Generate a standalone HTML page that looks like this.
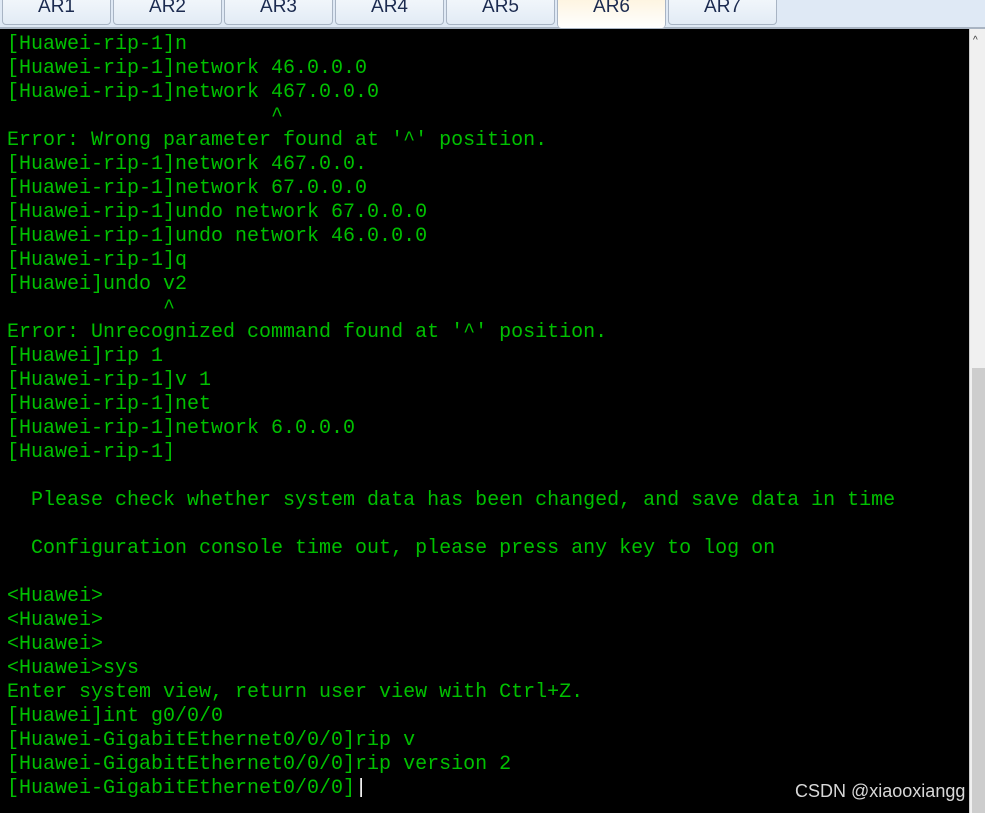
<!DOCTYPE html>
<html><head><meta charset="utf-8"><style>
*{margin:0;padding:0;box-sizing:border-box}
body{width:985px;height:813px;overflow:hidden;background:#000;position:relative;font-family:"Liberation Sans",sans-serif}
.tabs{position:absolute;left:0;top:0;width:985px;height:29px;background:#dfe9f5;border-bottom:2px solid #a9b4c2}
.tab{position:absolute;top:-6px;height:31px;width:109px;border:1px solid #a8b4c4;border-radius:4px;background:linear-gradient(#f4f8fc,#e2ebf5);color:#1c2b50;font-size:19px;text-align:center;line-height:24px}
.tab.act{background:linear-gradient(#fdf3dc,#fff);height:34px;border-bottom:none}
.term{position:absolute;left:0;top:29px;width:969px;height:784px;background:#000;color:#00c000;font-family:"Liberation Mono",monospace;font-size:20px;line-height:24px;padding:4px 0 0 7px;white-space:pre}
.sb{position:absolute;left:969px;top:29px;width:16px;height:784px;background:#f0f0f0;border-left:1px solid #ccc}
.thumb{position:absolute;left:2px;top:339px;width:13px;height:445px;background:#cdcdcd}
.wm{position:absolute;left:795px;top:781px;color:#d8d8d8;font-size:18px}
</style></head><body>
<div class="tabs">
<div class="tab" style="left:2px">AR1</div>
<div class="tab" style="left:113px">AR2</div>
<div class="tab" style="left:224px">AR3</div>
<div class="tab" style="left:335px">AR4</div>
<div class="tab" style="left:446px">AR5</div>
<div class="tab act" style="left:557px">AR6</div>
<div class="tab" style="left:668px">AR7</div>
</div>
<div class="term">[Huawei-rip-1]n
[Huawei-rip-1]network 46.0.0.0
[Huawei-rip-1]network 467.0.0.0
                      ^
Error: Wrong parameter found at '^' position.
[Huawei-rip-1]network 467.0.0.
[Huawei-rip-1]network 67.0.0.0
[Huawei-rip-1]undo network 67.0.0.0
[Huawei-rip-1]undo network 46.0.0.0
[Huawei-rip-1]q
[Huawei]undo v2
             ^
Error: Unrecognized command found at '^' position.
[Huawei]rip 1
[Huawei-rip-1]v 1
[Huawei-rip-1]net
[Huawei-rip-1]network 6.0.0.0
[Huawei-rip-1]

  Please check whether system data has been changed, and save data in time

  Configuration console time out, please press any key to log on

&lt;Huawei&gt;
&lt;Huawei&gt;
&lt;Huawei&gt;
&lt;Huawei&gt;sys
Enter system view, return user view with Ctrl+Z.
[Huawei]int g0/0/0
[Huawei-GigabitEthernet0/0/0]rip v
[Huawei-GigabitEthernet0/0/0]rip version 2
[Huawei-GigabitEthernet0/0/0]<span style="color:#fff">|</span></div>
<div class="sb"><div style="position:absolute;top:6px;left:3px;font-size:10px;color:#333">^</div><div class="thumb"></div></div>
<div class="wm">CSDN @xiaooxiangg</div>
</body></html>
